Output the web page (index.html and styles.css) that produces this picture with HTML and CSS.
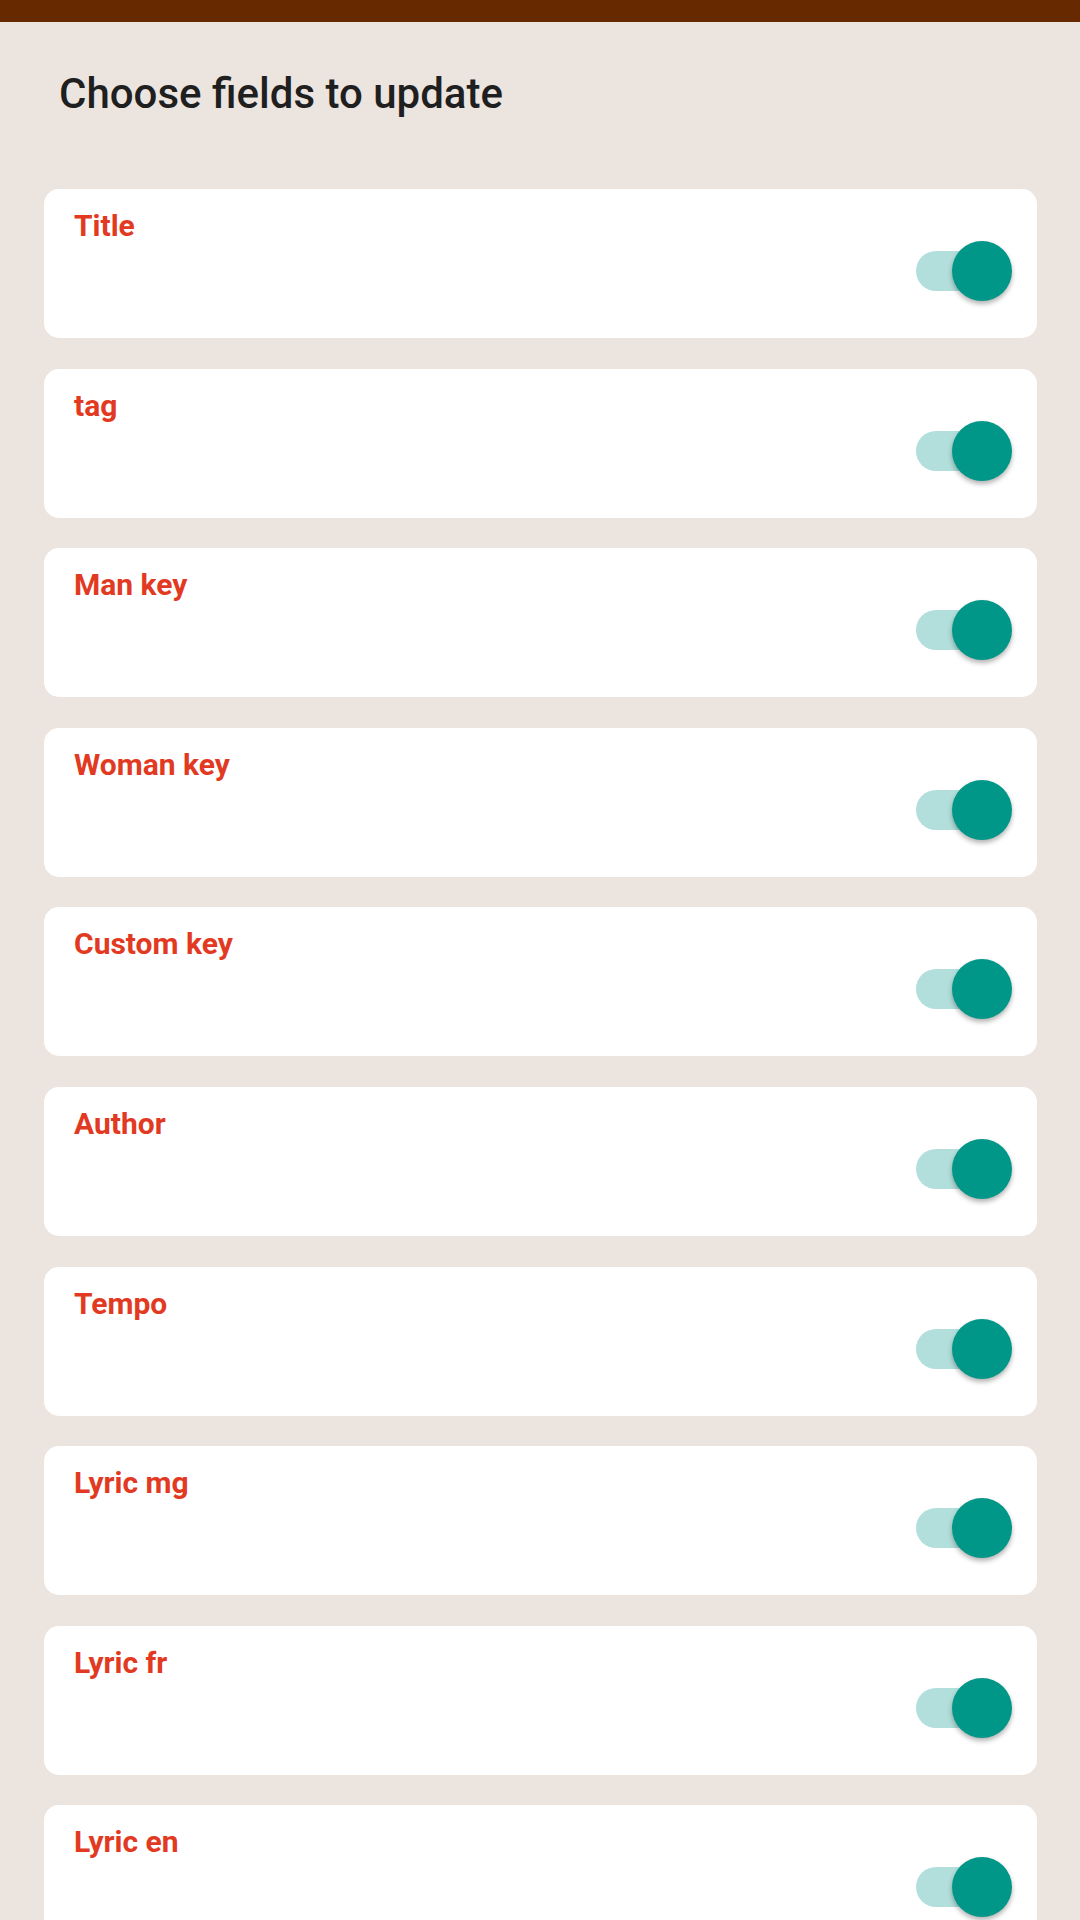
FILE: index.html
```html
<!DOCTYPE html>
<html lang="en">
<head>
    <meta charset="UTF-8">
    <meta name="viewport" content="width=device-width, initial-scale=1.0">
    <title>Choose fields to update</title>
    <link rel="stylesheet" href="styles.css">
</head>
<body>
    <div class="status-bar"></div>
    <h2 class="page-title">Choose fields to update</h2>

    <div class="field-list">
        <div class="field-item">
            <span class="field-name">Title</span>
            <div class="switch"><div class="track"></div><div class="thumb"></div></div>
        </div>
        <div class="field-item">
            <span class="field-name">tag</span>
            <div class="switch"><div class="track"></div><div class="thumb"></div></div>
        </div>
        <div class="field-item">
            <span class="field-name">Man key</span>
            <div class="switch"><div class="track"></div><div class="thumb"></div></div>
        </div>
        <div class="field-item">
            <span class="field-name">Woman key</span>
            <div class="switch"><div class="track"></div><div class="thumb"></div></div>
        </div>
        <div class="field-item">
            <span class="field-name">Custom key</span>
            <div class="switch"><div class="track"></div><div class="thumb"></div></div>
        </div>
        <div class="field-item">
            <span class="field-name">Author</span>
            <div class="switch"><div class="track"></div><div class="thumb"></div></div>
        </div>
        <div class="field-item">
            <span class="field-name">Tempo</span>
            <div class="switch"><div class="track"></div><div class="thumb"></div></div>
        </div>
        <div class="field-item">
            <span class="field-name">Lyric mg</span>
            <div class="switch"><div class="track"></div><div class="thumb"></div></div>
        </div>
        <div class="field-item">
            <span class="field-name">Lyric fr</span>
            <div class="switch"><div class="track"></div><div class="thumb"></div></div>
        </div>
        <div class="field-item">
            <span class="field-name">Lyric en</span>
            <div class="switch"><div class="track"></div><div class="thumb"></div></div>
        </div>
    </div>
</body>
</html>
```

FILE: styles.css
```css
body {
    font-family: Roboto, "Liberation Sans", sans-serif;
    background-color: #ebe4df;
    color: #222;
    margin: 0;
    padding: 0;
    height: 1920px;
    overflow: hidden;
}

.status-bar {
    height: 22px;
    background-color: #672a00;
}

.page-title {
    margin: 0;
    padding: 48px 0 0 59px;
    font-size: 42px;
    font-weight: 500;
    line-height: 48px;
    color: #1f1f1f;
}

.field-list {
    display: flex;
    flex-direction: column;
    gap: 30.6px;
    padding: 71px 43px 0 44px;
}

.field-item {
    display: flex;
    flex-direction: column;
    height: 149px;
    box-sizing: border-box;
    padding: 22px 25px 0 30px;
    background-color: #ffffff;
    border-radius: 15px;
}

.field-name {
    font-size: 30px;
    font-weight: 700;
    line-height: 30px;
    color: #e23a22;
}

.switch {
    position: relative;
    align-self: flex-end;
    width: 96px;
    height: 60px;
}

.track {
    position: absolute;
    left: 0;
    top: 10px;
    width: 88px;
    height: 40px;
    border-radius: 20px;
    background-color: #b2dfdb;
}

.thumb {
    position: absolute;
    right: 0;
    top: 0;
    width: 60px;
    height: 60px;
    border-radius: 50%;
    background-color: #009688;
    box-shadow: 0 3px 5px rgba(0, 0, 0, 0.3);
}
```
